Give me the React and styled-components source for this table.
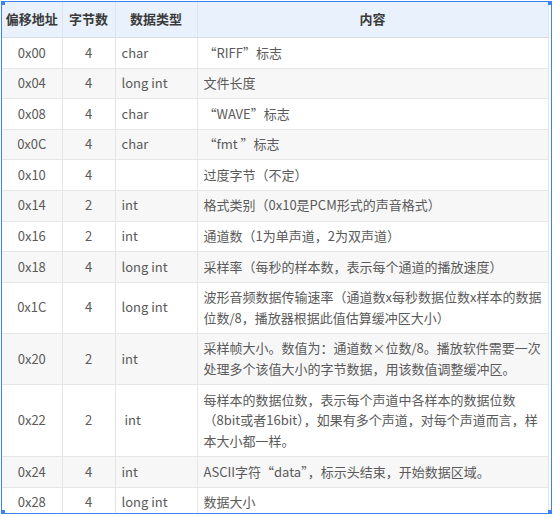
import styled, { createGlobalStyle } from "styled-components";

const GlobalStyle = createGlobalStyle`
  html, body {
    margin: 0;
    padding: 0;
    background: #ffffff;
  }
  body {
    font-family: "Noto Sans CJK SC", "Noto Sans", sans-serif;
  }
`;

const rows = [
  { offset: "0x00", size: "4", type: "char", desc: "“RIFF”标志" },
  { offset: "0x04", size: "4", type: "long int", desc: "文件长度" },
  { offset: "0x08", size: "4", type: "char", desc: "“WAVE”标志" },
  { offset: "0x0C", size: "4", type: "char", desc: "“fmt ”标志" },
  { offset: "0x10", size: "4", type: "", desc: "过度字节（不定）" },
  { offset: "0x14", size: "2", type: "int", desc: "格式类别（0x10是PCM形式的声音格式）" },
  { offset: "0x16", size: "2", type: "int", desc: "通道数（1为单声道，2为双声道）" },
  { offset: "0x18", size: "4", type: "long int", desc: "采样率（每秒的样本数，表示每个通道的播放速度）" },
  {
    offset: "0x1C",
    size: "4",
    type: "long int",
    desc: "波形音频数据传输速率（通道数x每秒数据位数x样本的数据位数/8，播放器根据此值估算缓冲区大小）",
  },
  {
    offset: "0x20",
    size: "2",
    type: "int",
    desc: "采样帧大小。数值为：通道数×位数/8。播放软件需要一次处理多个该值大小的字节数据，用该数值调整缓冲区。",
  },
  {
    offset: "0x22",
    size: "2",
    type: "\u00a0int",
    desc: "每样本的数据位数，表示每个声道中各样本的数据位数（8bit或者16bit），如果有多个声道，对每个声道而言，样本大小都一样。",
  },
  { offset: "0x24", size: "4", type: "int", desc: "ASCII字符“data”，标示头结束，开始数据区域。" },
  { offset: "0x28", size: "4", type: "long int", desc: "数据大小" },
];

const columns = [
  { title: "偏移地址", width: 60 },
  { title: "字节数", width: 53 },
  { title: "数据类型", width: 82 },
  { title: "内容", width: 351 },
];

function App() {
  return (
    <>
      <GlobalStyle />
      <Page>
        <Frame>
          <Handle $corner="tl" />
          <Handle $corner="tr" />
          <Handle $corner="bl" />
          <Handle $corner="br" />
          <Table>
            <colgroup>
              {columns.map((c) => (
                <col key={c.title} style={{ width: c.width }} />
              ))}
            </colgroup>
            <thead>
              <tr>
                {columns.map((c) => (
                  <HeadCell key={c.title}>{c.title}</HeadCell>
                ))}
              </tr>
            </thead>
            <tbody>
              {rows.map((r, i) => (
                <Row key={r.offset} $striped={i % 2 === 1}>
                  <Cell $align="center">{r.offset}</Cell>
                  <Cell $align="center">{r.size}</Cell>
                  <Cell $align="left">{r.type}</Cell>
                  <Cell $align="left">{r.desc}</Cell>
                </Row>
              ))}
            </tbody>
          </Table>
        </Frame>
      </Page>
    </>
  );
}

const Page = styled.div`
  padding: 1px;
  width: 553px;
  height: 516px;
  box-sizing: border-box;
`;

const Frame = styled.div`
  position: relative;
  width: 551px;
  height: 513px;
  box-sizing: border-box;
  border: 1.5px solid #3a82f7;
  overflow: hidden;
`;

const Handle = styled.span`
  position: absolute;
  width: 5px;
  height: 5px;
  background: #3a82f7;
  z-index: 2;
  ${({ $corner }) =>
    $corner === "tl"
      ? "top: -2px; left: -2px;"
      : $corner === "tr"
      ? "top: -2px; right: -2px;"
      : $corner === "bl"
      ? "bottom: -2px; left: -2px;"
      : "bottom: -2px; right: -2px;"}
`;

const Table = styled.table`
  width: 546px;
  table-layout: fixed;
  border-collapse: collapse;
  font-size: 13px;
  color: #5a5a5a;
`;

const HeadCell = styled.th`
  padding: 7.2px 0;
  line-height: 20.7px;
  white-space: nowrap;
  background: #e9f1fc;
  color: #3a3a3a;
  font-weight: 700;
  text-align: center;
  border-right: 1px solid #dfe4ea;
  border-bottom: 1px solid #d6dde6;
`;

const Row = styled.tr`
  background: ${({ $striped }) => ($striped ? "#f7f7f7" : "#ffffff")};
`;

const Cell = styled.td`
  padding: 4.45px 6px;
  line-height: 20.7px;
  text-align: ${({ $align }) => $align};
  vertical-align: middle;
  border-right: 1px solid #e6e6e6;
  border-bottom: 1px solid #e6e6e6;
`;

export default App;
